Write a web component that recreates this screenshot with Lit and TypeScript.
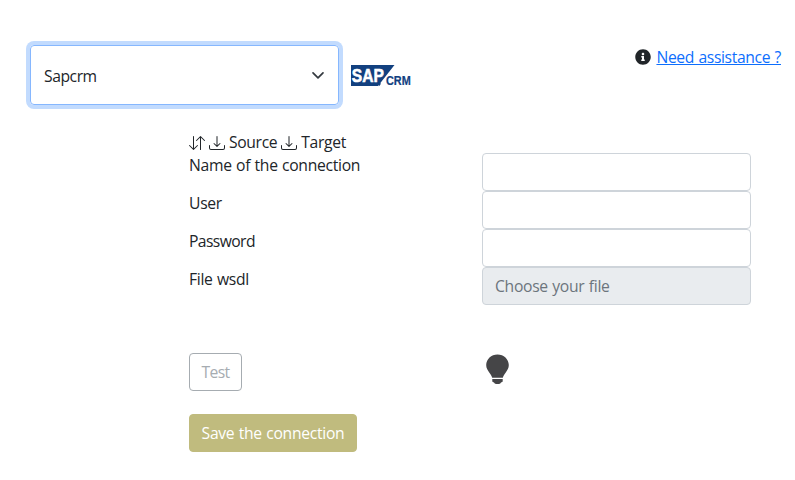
import { LitElement, html, css, svg } from "lit";
import { customElement } from "lit/decorators.js";

const download = html`<svg class="icon" width="16" height="16" viewBox="0 0 16 16" fill="currentColor">
  <path d="M.5 9.9a.5.5 0 0 1 .5.5v2.5a1 1 0 0 0 1 1h12a1 1 0 0 0 1-1v-2.5a.5.5 0 0 1 1 0v2.5a2 2 0 0 1-2 2H2a2 2 0 0 1-2-2v-2.5a.5.5 0 0 1 .5-.5"/>
  <path d="M7.646 11.854a.5.5 0 0 0 .708 0l3-3a.5.5 0 0 0-.708-.708L8.5 10.293V1.5a.5.5 0 0 0-1 0v8.793L5.354 8.146a.5.5 0 1 0-.708.708z"/>
</svg>`;

const logoText = svg`
  <text transform="translate(.8 18) scale(.82 1)" font-size="19" font-weight="700" fill="#fff" stroke="#fff" stroke-width=".6">SAP</text>
  <text transform="translate(35 20.5) scale(.87 1)" font-size="12.5" font-weight="700" fill="#12407f" stroke="#12407f" stroke-width=".2">CRM</text>`;

@customElement("app-root")
export class AppRoot extends LitElement {
  static styles = css`
    :host {
      display: block;
      width: 795px;
      height: 480px;
      overflow: hidden;
      background: #fff;
      color: #212529;
      font: 15.7px/24px "Open Sans", "Noto Sans", sans-serif;
      letter-spacing: -0.3px;
      word-spacing: 0.6px;
    }
    * { box-sizing: border-box; }
    .top { display: flex; height: 105px; padding: 45px 14px 0 30px; }
    .select {
      display: flex;
      align-items: center;
      justify-content: space-between;
      width: 309px;
      height: 60px;
      padding: 1px 12px 0 13px;
      border: 1px solid #86b7fe;
      border-radius: 4px;
      box-shadow: 0 0 0 4px #c2dbfe;
    }
    .value { letter-spacing: -0.45px; }
    .logo { margin: 19px 0 0 12px; overflow: visible; font-family: "Liberation Sans", sans-serif; letter-spacing: 0; }
    .help { display: flex; align-items: center; gap: 5px; height: 24px; margin-left: auto; }
    .link { color: #0d6efd; text-decoration: underline; letter-spacing: -0.35px; }
    .form { padding: 25px 44px 0 189px; }
    .modes { display: flex; align-items: center; gap: 4px; height: 23px; }
    .icon { flex: none; margin-top: 2px; }
    .mode { letter-spacing: -0.35px; }
    .row { display: flex; justify-content: space-between; height: 38px; }
    .short { letter-spacing: -0.6px; }
    .field {
      width: 269px;
      height: 38px;
      padding: 6px 12px;
      border: 1px solid #ced4da;
      border-radius: 4px;
      color: #6c757d;
      font: inherit;
      letter-spacing: -0.3px;
      outline: 0;
      background: #fff;
    }
    .file { background: #e9ecef; }
    .actions { display: flex; height: 61px; margin-top: 48px; }
    .button {
      height: 38px;
      padding: 6px 0;
      border: 1px solid #a6acb1;
      border-radius: 4px;
      background: #fff;
      color: #a6acb1;
      font: inherit;
      letter-spacing: inherit;
      word-spacing: inherit;
      text-align: center;
    }
    .test { width: 53px; letter-spacing: -0.6px; }
    .save { width: 168px; border-color: #c0bb7e; background: #c0bb7e; color: #fff; }
    .bulb { margin: 1px 0 0 244px; }
  `;

  render() {
    return html`
      <div class="top">
        <div class="select">
          <span class="value">Sapcrm</span>
          <svg width="16" height="12" viewBox="0 0 16 16" preserveAspectRatio="xMidYMid slice" fill="none" stroke="#343a40" stroke-linecap="round" stroke-linejoin="round" stroke-width="1.7"><path d="m3 4.800 5 5 5-5"/></svg>
        </div>
        <svg class="logo" width="61" height="23" viewBox="0 0 61 23">
          <path d="M0 1h43.500L27 22H0z" fill="#12407f"/>
          ${logoText}
          <path d="m27.500 18.800 2.200.2-.3 1.800-1.500 1.500" fill="#12407f"/>
        </svg>
        <div class="help">
          <svg width="16" height="16" viewBox="0 0 512 512" fill="#212529"><path d="M256 8C119.043 8 8 119.083 8 256c0 136.997 111.043 248 248 248s248-111.003 248-248C504 119.083 392.957 8 256 8zm0 110c23.196 0 42 18.804 42 42s-18.804 42-42 42-42-18.804-42-42 18.804-42 42-42zm56 254c0 6.627-5.373 12-12 12h-88c-6.627 0-12-5.373-12-12v-24c0-6.627 5.373-12 12-12h12v-64h-12c-6.627 0-12-5.373-12-12v-24c0-6.627 5.373-12 12-12h64c6.627 0 12 5.373 12 12v100h12c6.627 0 12 5.373 12 12v24z"/></svg>
          <span class="link">Need assistance ?</span>
        </div>
      </div>
      <div class="form">
        <div class="modes">
          <svg class="icon" width="16" height="16" viewBox="0 0 16 16" fill="currentColor"><path d="M11.5 15a.5.5 0 0 0 .5-.5V2.707l3.146 3.147a.5.5 0 0 0 .708-.708l-4-4a.5.5 0 0 0-.708 0l-4 4a.5.5 0 1 0 .708.708L11 2.707V14.5a.5.5 0 0 0 .5.5m-7-14a.5.5 0 0 1 .5.5v11.793l3.146-3.147a.5.5 0 0 1 .708.708l-4 4a.5.5 0 0 1-.708 0l-4-4a.5.5 0 0 1 .708-.708L4 13.293V1.5a.5.5 0 0 1 .5-.5"/></svg>
          ${download}<span class="mode">Source</span>${download}<span class="mode">Target</span>
        </div>
        ${["Name of the connection", "User", "Password"].map(
          (label) => html`<div class="row"><span class=${label === "Password" ? "short" : "label"}>${label}</span><input class="field" aria-label=${label}></div>`
        )}
        <div class="row"><span>File wsdl</span><div class="field file">Choose your file</div></div>
        <div class="actions">
          <button class="button test">Test</button>
          <svg class="bulb" width="23" height="30" viewBox="0 0 23 30" fill="#454547">
            <path d="M11.5.5C5.2.5.2 5.200.2 11.100c0 3.200 1.400 5.200 3.200 7.600 1.300 1.800 2.300 3.300 2.800 5.100h10.600c.5-1.800 1.500-3.300 2.800-5.100 1.800-2.400 3.200-4.400 3.200-7.600C22.800 5.200 17.800.5 11.500.5z"/>
            <path d="M6.300 25.100h10.400v2.100q0 .6-.6.900l-1.100.500q-.5 1.300-2 1.300h-3q-1.500 0-2-1.300l-1.100-.5q-.6-.3-.6-.9z"/>
          </svg>
        </div>
        <button class="button save">Save the connection</button>
      </div>
    `;
  }
}
